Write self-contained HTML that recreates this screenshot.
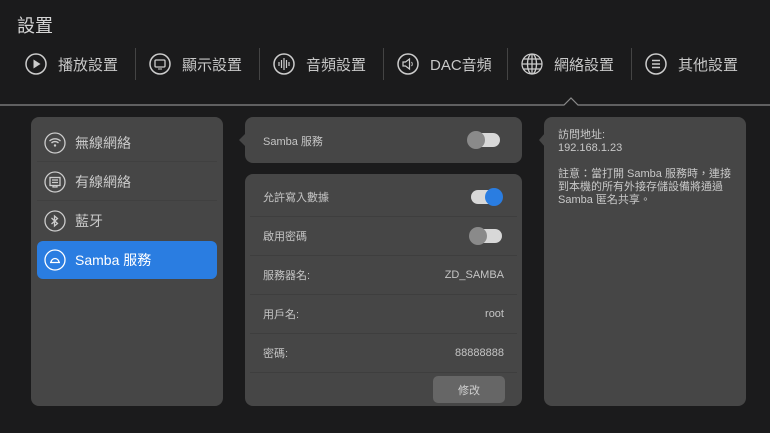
<!DOCTYPE html>
<html><head><meta charset="utf-8"><style>
*{margin:0;padding:0;box-sizing:border-box}
body{width:770px;height:433px;background:#1b1b1c;font-family:"Liberation Sans","Noto Sans CJK TC",sans-serif;color:#cfcfcf;position:relative;overflow:hidden}
.abs{position:absolute}
.title{left:17px;top:12px;font-size:18px;color:#d6d6d6}
.tab{top:50px;height:28px;display:flex;align-items:center;font-size:15px;color:#c8c8c8}
.tab svg{margin-right:11px}
.sep{top:48px;width:1px;height:32px;background:#444}
.panel{background:#464646;border-radius:8px}
.li{position:absolute;left:6px;width:180px;height:38px;display:flex;align-items:center;padding-left:7px;font-size:14px;color:#c8c8c8}
.li svg{margin-right:9px}
.row{position:absolute;left:5px;width:267px;height:39px;border-bottom:1px solid #3e3e3e;display:flex;align-items:center;justify-content:space-between;padding:0 13px;font-size:11px;color:#c4c4c4}
.sw{position:relative;width:30px;height:14px;border-radius:7px;background:#d8d8d8}
.sw i{position:absolute;top:-2px;left:-3px;width:18px;height:18px;border-radius:50%;background:#8a8a8a}
.sw.on i{left:14px;background:#2a7de1}
</style></head><body>
<div class="abs title">設置</div>

<div class="abs tab" style="left:25px"><svg width="22" height="22" viewBox="0 0 22 22"><circle cx="11" cy="11" r="10" fill="none" stroke="#ccc" stroke-width="1.5"/><path d="M8.5 6.5L15.5 11L8.5 15.5Z" fill="#ccc"/></svg>播放設置</div>
<div class="abs sep" style="left:135px"></div>
<div class="abs tab" style="left:149px"><svg width="22" height="22" viewBox="0 0 22 22"><circle cx="11" cy="11" r="10" fill="none" stroke="#ccc" stroke-width="1.5"/><rect x="6" y="7" width="10" height="7" rx="1" fill="none" stroke="#ccc" stroke-width="1.3"/><path d="M9 16h4" stroke="#ccc"/></svg>顯示設置</div>
<div class="abs sep" style="left:259px"></div>
<div class="abs tab" style="left:273px"><svg width="22" height="22" viewBox="0 0 22 22"><circle cx="11" cy="11" r="10" fill="none" stroke="#ccc" stroke-width="1.5"/><path d="M6 9v4M8.5 7v8M11 5v12M13.5 7v8M16 9v4" stroke="#ccc" stroke-width="1.2"/></svg>音頻設置</div>
<div class="abs sep" style="left:383px"></div>
<div class="abs tab" style="left:397px"><svg width="22" height="22" viewBox="0 0 22 22"><circle cx="11" cy="11" r="10" fill="none" stroke="#ccc" stroke-width="1.5"/><path d="M6 9h2.5l4-3v10l-4-3H6Z" fill="none" stroke="#ccc" stroke-width="1.2"/><path d="M14.5 9a3 3 0 0 1 0 4" fill="none" stroke="#ccc"/></svg>DAC音頻</div>
<div class="abs sep" style="left:507px"></div>
<div class="abs tab" style="left:521px"><svg width="22" height="22" viewBox="0 0 22 22"><g fill="none" stroke="#ccc" stroke-width="1.3"><circle cx="11" cy="11" r="10"/><ellipse cx="11" cy="11" rx="4.5" ry="10"/><path d="M11 1v20M1 11h20M2.5 6h17M2.5 16h17"/></g></svg>網絡設置</div>
<div class="abs sep" style="left:631px"></div>
<div class="abs tab" style="left:645px"><svg width="22" height="22" viewBox="0 0 22 22"><circle cx="11" cy="11" r="10" fill="none" stroke="#ccc" stroke-width="1.5"/><path d="M7 7.5h8M7 11h8M7 14.5h8" stroke="#ccc" stroke-width="1.5"/></svg>其他設置</div>

<svg class="abs" style="left:0;top:96px" width="770" height="12"><path d="M0 9H564L571 2L578 9H770" fill="none" stroke="#8a8a8a" stroke-width="1.2"/></svg>

<div class="abs panel" style="left:31px;top:117px;width:192px;height:289px">
 <div class="li" style="top:7px;border-bottom:1px solid #404040"><svg width="22" height="22" viewBox="0 0 22 22"><g fill="none" stroke="#ccc" stroke-width="1.3"><circle cx="11" cy="11" r="10"/><path d="M5.5 9a8 8 0 0 1 11 0M7.5 11a5 5 0 0 1 7 0"/></g><circle cx="11" cy="13.5" r="1.2" fill="#ccc"/></svg>無線網絡</div>
 <div class="li" style="top:46px;border-bottom:1px solid #404040"><svg width="22" height="22" viewBox="0 0 22 22"><g fill="none" stroke="#ccc" stroke-width="1.3"><circle cx="11" cy="11" r="10"/><rect x="6" y="6.5" width="10" height="8"/><path d="M8 9h6M8 11.5h6M9 14.5v1.5h4v-1.5"/></g></svg>有線網絡</div>
 <div class="li" style="top:85px"><svg width="22" height="22" viewBox="0 0 22 22"><g fill="none" stroke="#ccc" stroke-width="1.3"><circle cx="11" cy="11" r="10"/><path d="M7.5 8l6 5.5-3 2.5V6l3 2.5-6 5.5"/></g></svg>藍牙</div>
 <div class="li" style="top:124px;background:#2a7de1;border-radius:6px;color:#fff"><svg width="22" height="22" viewBox="0 0 22 22"><g fill="none" stroke="#fff" stroke-width="1.3"><circle cx="11" cy="11" r="10"/><path d="M6 13.5h10M7 13.5a4 4 0 0 1 8 0"/></g></svg>Samba 服務</div>
</div>

<div class="abs panel" style="left:245px;top:117px;width:277px;height:46px"></div>
<svg class="abs" style="left:238px;top:133px" width="8" height="14"><path d="M8 0L1 7L8 14Z" fill="#464646"/></svg>
<div class="abs" style="left:263px;top:133px;font-size:11px;color:#c4c4c4">Samba 服務</div>
<div class="abs sw" style="left:470px;top:133px"><i></i></div>

<div class="abs panel" style="left:245px;top:174px;width:277px;height:232px;overflow:hidden">
 <div class="row" style="top:4px"><span>允許寫入數據</span><div class="sw on" style="margin-right:3px"><i></i></div></div>
 <div class="row" style="top:43px"><span>啟用密碼</span><div class="sw" style="margin-right:2px"><i></i></div></div>
 <div class="row" style="top:82px"><span>服務器名:</span><span>ZD_SAMBA</span></div>
 <div class="row" style="top:121px"><span>用戶名:</span><span>root</span></div>
 <div class="row" style="top:160px"><span>密碼:</span><span>88888888</span></div>
 <div class="abs" style="left:188px;top:202px;width:72px;height:27px;background:#666;border-radius:5px;font-size:11px;color:#cfcfcf;display:flex;align-items:center;justify-content:center">修改</div>
</div>

<div class="abs panel" style="left:544px;top:117px;width:202px;height:289px"></div>
<svg class="abs" style="left:538px;top:133px" width="7" height="14"><path d="M7 0L1 7L7 14Z" fill="#464646"/></svg>
<div class="abs" style="left:558px;top:129px;white-space:nowrap;font-size:11px;line-height:13px;color:#c8c8c8">訪問地址:<br>192.168.1.23<br><br>註意：當打開 Samba 服務時，連接<br>到本機的所有外接存儲設備將通過<br>Samba 匿名共享。</div>
</body></html>
